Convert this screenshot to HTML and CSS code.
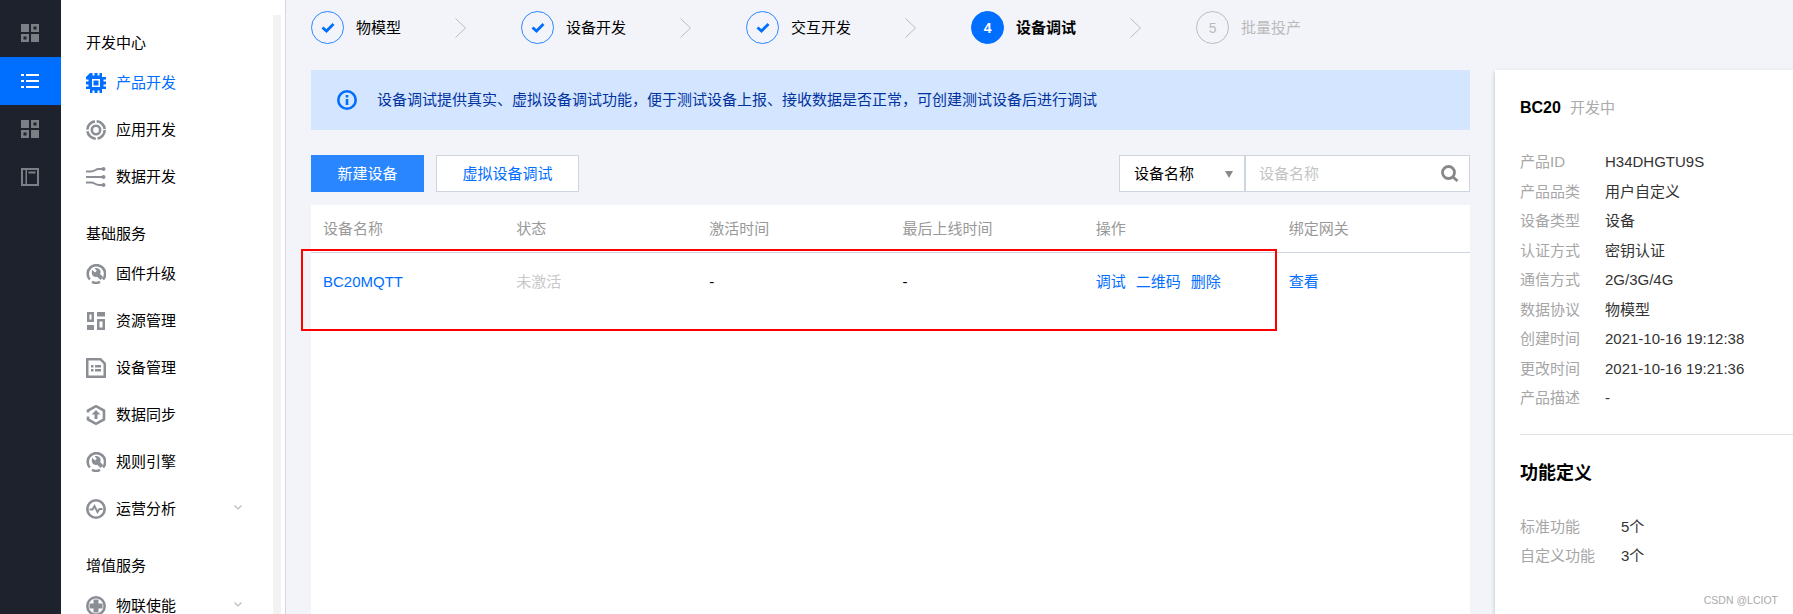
FILE: index.html
```html
<!DOCTYPE html>
<html lang="zh-CN">
<head>
  <meta charset="UTF-8" />
  <title>设备调试</title>
  <link rel="stylesheet" href="styles.css">
</head>
<body>
  <!-- Icon rail -->
  <div class="rail">
    <div class="rail-item">
      <svg width="18" height="18" viewBox="0 0 18 18"><path d="M0 0h8v8H0zM0 10h8v8H0zM10 0h8v8h-8zM10 10h8v8h-8z"/><path class="hole" d="M12.5 2.5h3v3h-3zM2.5 12.5h3v3h-3z"/></svg>
    </div>
    <div class="rail-item active">
      <svg width="18" height="18" viewBox="0 0 18 18"><path d="M0 2h3v2H0zM5 2h13v2H5zM0 8h3v2H0zM5 8h13v2H5zM0 14h3v2H0zM5 14h13v2H5z"/></svg>
    </div>
    <div class="rail-item">
      <svg width="18" height="18" viewBox="0 0 18 18"><path d="M0 0h8v8H0zM0 10h8v8H0zM10 0h8v8h-8zM10 10h8v8h-8z"/><path class="hole" d="M12.5 2.5h3v3h-3zM2.5 12.5h3v3h-3z"/></svg>
    </div>
    <div class="rail-item">
      <svg width="18" height="18" viewBox="0 0 18 18"><path fill-rule="evenodd" d="M0 0h18v18H0zM2 2v14h2.500V2zM6 2v14h10V2z"/><path d="M7.500 3.500h7v2h-7z"/></svg>
    </div>
  </div>

  <!-- Sub navigation -->
  <nav class="nav">
    <div class="scroll-track"></div>

    <div class="nav-title">开发中心</div>
    <a class="nav-item current">
      <svg class="nav-icon" viewBox="0 0 20 20"><path fill-rule="evenodd" d="M4 0h2.500v2.500h2V0h3v2.500h2V0H16v4h4v2.500h-2.500v2H20v3h-2.500v2H20V16h-4v4h-2.500v-2.500h-2V20h-3v-2.500h-2V20H4v-4H0v-2.500h2.500v-2H0v-3h2.500v-2H0V4zM6 6v8h8V6z"/><path d="M7.500 7.500h5v5h-5z"/></svg>
      <span>产品开发</span>
    </a>
    <a class="nav-item">
      <svg class="nav-icon" viewBox="0 0 20 20"><circle class="line dash" cx="10" cy="10" r="8.700"/><circle class="line" cx="10" cy="10" r="4.200"/></svg>
      <span>应用开发</span>
    </a>
    <a class="nav-item">
      <svg class="nav-icon" viewBox="0 0 20 20"><path class="line thin" d="M0 4.500h5c4 0 4-2.500 8-2.500h3M0 10h16M0 15.500h5c4 0 4 2.500 8 2.500h3"/><circle cx="17.500" cy="2" r="2"/><circle cx="17.500" cy="10" r="2"/><circle cx="17.500" cy="18" r="2"/></svg>
      <span>数据开发</span>
    </a>

    <div class="nav-title group">基础服务</div>
    <a class="nav-item">
      <svg class="nav-icon" viewBox="0 0 20 20"><use href="#ic-wrench"/></svg>
      <span>固件升级</span>
    </a>
    <a class="nav-item">
      <svg class="nav-icon" viewBox="0 0 20 20"><path fill-rule="evenodd" d="M1 1h7v10H1zM3.500 3.500v5h2v-5z"/><path d="M11 1h8v4.500h-8zM1 14h7v5H1z"/><path fill-rule="evenodd" d="M11 8h8v11h-8zM13.500 10.500v6h3v-6z"/></svg>
      <span>资源管理</span>
    </a>
    <a class="nav-item">
      <svg class="nav-icon" viewBox="0 0 20 20"><path fill-rule="evenodd" d="M0 0h15l5 5v15H0zM2.500 2.500v15h15V6L14 2.500z"/><path d="M5 7h2.500v2.500H5zM9 7h6v2.500H9zM5 11h2.500v2.500H5zM9 11h6v2.500H9z"/></svg>
      <span>设备管理</span>
    </a>
    <a class="nav-item">
      <svg class="nav-icon" viewBox="0 0 20 20"><path class="line" d="M2 7.500v-2L10 1.200l8 4.300v9L10 18.800 2 14.500v-3"/><path d="M10 5l4.500 4.500h-3V14h-3V9.500h-3z"/></svg>
      <span>数据同步</span>
    </a>
    <a class="nav-item">
      <svg class="nav-icon" viewBox="0 0 20 20"><use href="#ic-wrench"/></svg>
      <span>规则引擎</span>
    </a>
    <a class="nav-item">
      <svg class="nav-icon" viewBox="0 0 20 20"><circle class="line" cx="10" cy="10" r="8.700"/><path class="line thin" d="M3.500 10.500h3l2-3.500 3 6 2-3h3"/></svg>
      <span>运营分析</span>
      <svg class="nav-arrow" viewBox="0 0 8 5"><path d="M.5.500 4 4 7.500.5"/></svg>
    </a>

    <div class="nav-title group">增值服务</div>
    <a class="nav-item">
      <svg class="nav-icon" viewBox="0 0 20 20"><circle class="line" cx="10" cy="10" r="8.700"/><path d="M7.500 3.500h5v4h4v5h-4v4h-5v-4h-4v-5h4z"/></svg>
      <span>物联使能</span>
      <svg class="nav-arrow" viewBox="0 0 8 5"><path d="M.5.500 4 4 7.500.5"/></svg>
    </a>
  </nav>

  <!-- Shared wrench icon -->
  <svg class="defs" width="0" height="0">
    <symbol id="ic-wrench" viewBox="0 0 20 20">
      <path fill="none" stroke="currentColor" stroke-width="2.600" d="M3.800 15.500A8.700 8.700 0 1 1 17 15.500M6 17.900a8.700 8.700 0 0 0 8 0"/>
      <path fill="currentColor" d="M6.200 5.800 9 8.400l1.800-1.700L8.600 4.300c2.500-1.200 5.600.5 6 3 .2 1-.1 2-.5 2.700l3 3-2.600 3-3.300-3.200c-2.900 1-6.700-1.400-5-7z"/>
    </symbol>
  </svg>

  <!-- Main content -->
  <main class="main">
    <div class="steps">
      <div class="step">
        <span class="step-num done"><svg width="14" height="11" viewBox="0 0 14 11"><path d="M1.500 5.500 5.500 9 12.500 2"/></svg></span>
        <span class="step-name">物模型</span>
      </div>
      <svg class="step-sep" viewBox="0 0 11 20"><path d="M.5.500 10.500 10 .5 19.500"/></svg>
      <div class="step">
        <span class="step-num done"><svg width="14" height="11" viewBox="0 0 14 11"><path d="M1.500 5.500 5.500 9 12.500 2"/></svg></span>
        <span class="step-name">设备开发</span>
      </div>
      <svg class="step-sep" viewBox="0 0 11 20"><path d="M.5.500 10.500 10 .5 19.500"/></svg>
      <div class="step">
        <span class="step-num done"><svg width="14" height="11" viewBox="0 0 14 11"><path d="M1.500 5.500 5.500 9 12.500 2"/></svg></span>
        <span class="step-name">交互开发</span>
      </div>
      <svg class="step-sep" viewBox="0 0 11 20"><path d="M.5.500 10.500 10 .5 19.500"/></svg>
      <div class="step">
        <span class="step-num now">4</span>
        <span class="step-name bold">设备调试</span>
      </div>
      <svg class="step-sep" viewBox="0 0 11 20"><path d="M.5.500 10.500 10 .5 19.500"/></svg>
      <div class="step todo">
        <span class="step-num">5</span>
        <span class="step-name">批量投产</span>
      </div>
    </div>

    <div class="banner">
      <svg width="20" height="20" viewBox="0 0 20 20"><circle cx="10" cy="10" r="8.700"/><path d="M10 5v2.500M10 9v6"/></svg>
      <span>设备调试提供真实、虚拟设备调试功能，便于测试设备上报、接收数据是否正常，可创建测试设备后进行调试</span>
    </div>

    <div class="toolbar">
      <button class="btn primary">新建设备</button>
      <button class="btn">虚拟设备调试</button>
      <div class="search">
        <div class="select">设备名称<i class="caret"></i></div>
        <div class="search-box">
          <input type="text" placeholder="设备名称" />
          <svg width="18" height="17" viewBox="0 0 18 17"><circle cx="7.500" cy="7.500" r="6"/><path d="M12 12l4.500 4"/></svg>
        </div>
      </div>
    </div>

    <div class="table-wrap">
      <table>
        <thead>
          <tr>
            <th>设备名称</th>
            <th>状态</th>
            <th>激活时间</th>
            <th>最后上线时间</th>
            <th>操作</th>
            <th>绑定网关</th>
          </tr>
        </thead>
        <tbody>
          <tr>
            <td><a>BC20MQTT</a></td>
            <td class="muted">未激活</td>
            <td>-</td>
            <td>-</td>
            <td class="actions"><a>调试</a><a>二维码</a><a>删除</a></td>
            <td><a>查看</a></td>
          </tr>
        </tbody>
      </table>
    </div>
  </main>

  <!-- Product info -->
  <aside class="panel">
    <div class="panel-title"><b>BC20</b><span>开发中</span></div>
    <dl class="info">
      <div><dt>产品ID</dt><dd>H34DHGTU9S</dd></div>
      <div><dt>产品品类</dt><dd>用户自定义</dd></div>
      <div><dt>设备类型</dt><dd>设备</dd></div>
      <div><dt>认证方式</dt><dd>密钥认证</dd></div>
      <div><dt>通信方式</dt><dd>2G/3G/4G</dd></div>
      <div><dt>数据协议</dt><dd>物模型</dd></div>
      <div><dt>创建时间</dt><dd>2021-10-16 19:12:38</dd></div>
      <div><dt>更改时间</dt><dd>2021-10-16 19:21:36</dd></div>
      <div><dt>产品描述</dt><dd>-</dd></div>
    </dl>
    <h2>功能定义</h2>
    <dl class="info wide">
      <div><dt>标准功能</dt><dd>5个</dd></div>
      <div><dt>自定义功能</dt><dd>3个</dd></div>
    </dl>
  </aside>

  <!-- Annotation and watermark on top of the screenshot -->
  <div class="red-box"></div>
  <div class="watermark">CSDN @LCIOT</div>
</body>
</html>
```

FILE: styles.css
```css
html, body {
  height: 100%;
}

body {
  position: relative;
  display: flex;
  margin: 0;
  overflow: hidden;
  background: #f2f4f9;
  color: #000;
  font-family: "Liberation Sans", "Noto Sans CJK SC", sans-serif;
  font-size: 15px;
  line-height: 20px;
}

/* Icon rail */
.rail {
  flex: none;
  width: 61px;
  padding-top: 9px;
  background: #1e222d;
}

.rail-item {
  display: flex;
  justify-content: center;
  align-items: center;
  height: 48px;
  margin-right: 1px;
}

.rail-item svg {
  fill: #7b8087;
}

.rail-item .hole {
  fill: #1e222d;
}

.rail-item.active {
  margin-right: 0;
  padding-right: 1px;
  background: #006eff;
}

.rail-item.active svg {
  fill: #fff;
}

/* Sub navigation */
.nav {
  position: relative;
  flex: none;
  width: 224px;
  padding-top: 33px;
  background: #fff;
  border-right: 1px solid #d5d8de;
}

.scroll-track {
  position: absolute;
  top: 15px;
  bottom: 0;
  left: 212px;
  width: 8px;
  background: #f2f2f2;
}

.nav-title {
  height: 20px;
  margin-bottom: 6px;
  padding-left: 25px;
}

.nav-title.group {
  margin-top: 24px;
}

.nav-item {
  display: flex;
  align-items: center;
  height: 47px;
  padding-left: 25px;
}

.nav-item span {
  margin-left: 10px;
}

.nav-icon {
  width: 20px;
  height: 20px;
  color: #8b8f95;
  fill: #8b8f95;
}

.nav-item.current {
  color: #006eff;
}

.nav-item.current .nav-icon {
  fill: #006eff;
}

.nav-arrow {
  width: 8px;
  height: 5px;
  margin: -2px 0 0 58px;
  fill: none;
  stroke: #bbb;
  stroke-width: 1.2;
}

.line {
  fill: none;
  stroke: #8b8f95;
  stroke-width: 2.6;
}

.line.thin {
  stroke-width: 2;
}

.line.dash {
  stroke-dasharray: 12 1.8;
}

.defs {
  position: absolute;
}

/* Main content */
.main {
  display: flex;
  flex: none;
  flex-direction: column;
  width: 1159px;
  padding: 11px 0 0 25px;
}

.steps {
  display: flex;
  align-items: center;
  height: 33px;
}

.step {
  display: flex;
  align-items: center;
}

.step-num {
  display: flex;
  justify-content: center;
  align-items: center;
  box-sizing: border-box;
  width: 33px;
  height: 33px;
  margin-right: 12px;
  border: 1px solid #bbb;
  border-radius: 50%;
  color: #bbb;
  font-size: 14px;
}

.step-num.done {
  border-color: #2a86ff;
}

.step-num.done svg {
  fill: none;
  stroke: #006eff;
  stroke-width: 2.8;
}

.step-num.now {
  border-color: #006eff;
  background: #006eff;
  color: #fff;
  font-weight: bold;
}

.step-name.bold {
  font-weight: bold;
}

.step.todo .step-name {
  color: #bbb;
}

.step-sep {
  flex: none;
  width: 11px;
  height: 20px;
  margin: 0 55px 0 54px;
  fill: none;
  stroke: #bbb;
}

.banner {
  display: flex;
  align-items: center;
  height: 60px;
  margin-top: 26px;
  padding-left: 26px;
  background: #d4e5ff;
  color: #00339f;
}

.banner svg {
  flex: none;
  margin-right: 20px;
  fill: none;
  stroke: #006eff;
  stroke-width: 2.6;
}

.toolbar {
  display: flex;
  height: 37px;
  margin-top: 25px;
}

.btn {
  box-sizing: border-box;
  width: 143px;
  height: 37px;
  margin-left: 12px;
  padding: 0;
  border: 1px solid #cfd5de;
  background: #fff;
  color: #006eff;
  font: inherit;
}

.btn.primary {
  width: 113px;
  margin-left: 0;
  border: none;
  background: #2a86ff;
  color: #fff;
}

.search {
  display: flex;
  margin-left: auto;
}

.select {
  display: flex;
  align-items: center;
  box-sizing: border-box;
  width: 126px;
  padding-left: 14px;
  border: 1px solid #cfd5de;
  background: #fff;
}

.caret {
  width: 0;
  height: 0;
  margin: 1px 0 0 31px;
  border: 4.5px solid transparent;
  border-top: 7px solid #888;
  border-bottom: none;
}

.search-box {
  display: flex;
  align-items: center;
  box-sizing: border-box;
  width: 225px;
  padding: 0 10px 0 13px;
  border: 1px solid #cfd5de;
  background: #fff;
}

.search-box input {
  flex: 1;
  min-width: 0;
  padding: 0;
  border: none;
  outline: none;
  font: inherit;
}

.search-box input::placeholder {
  color: #c4c4c4;
}

.search-box svg {
  flex: none;
  fill: none;
  stroke: #888;
  stroke-width: 2.8;
}

.table-wrap {
  flex: 1;
  margin-top: 13px;
  background: #fff;
}

table {
  width: 100%;
  border-collapse: collapse;
  table-layout: fixed;
}

th {
  height: 47px;
  padding: 0 12px;
  border-bottom: 1px solid #cfd5de;
  color: #999;
  font-weight: normal;
  text-align: left;
}

td {
  padding: 19px 12px 0;
  vertical-align: top;
}

td a {
  color: #006eff;
}

td.muted {
  color: #c8c8c8;
}

.actions a {
  margin-right: 10px;
}

/* Product info */
.panel {
  flex: none;
  box-sizing: border-box;
  width: 298px;
  margin: 70px 0 0 25px;
  padding: 28px 0 0 25px;
  background: #fff;
  box-shadow: 0 2px 4px rgba(54, 58, 80, 0.3);
}

.panel-title {
  margin-bottom: 29px;
}

.panel-title b {
  font-size: 16px;
}

.panel-title span {
  margin-left: 9px;
  color: #aaa;
}

.info {
  margin: 0;
}

.info div {
  display: flex;
  height: 29.5px;
  line-height: 29px;
}

.info dt {
  width: 85px;
  color: #a6a6a6;
}

.info dd {
  margin: 0;
  color: #333;
}

.info.wide dt {
  width: 101px;
}

.panel h2 {
  height: 26px;
  margin: 21px 0 26px;
  padding-top: 25px;
  border-top: 1px solid #dfe1e6;
  font-size: 18px;
  line-height: 26px;
}

/* Annotation */
.red-box {
  position: absolute;
  top: 249px;
  left: 301px;
  box-sizing: border-box;
  width: 976px;
  height: 82px;
  border: 2px solid #f00;
}

.watermark {
  position: absolute;
  top: 591px;
  right: 15px;
  color: #aaa;
  font-size: 10.5px;
  line-height: 18px;
}
```
